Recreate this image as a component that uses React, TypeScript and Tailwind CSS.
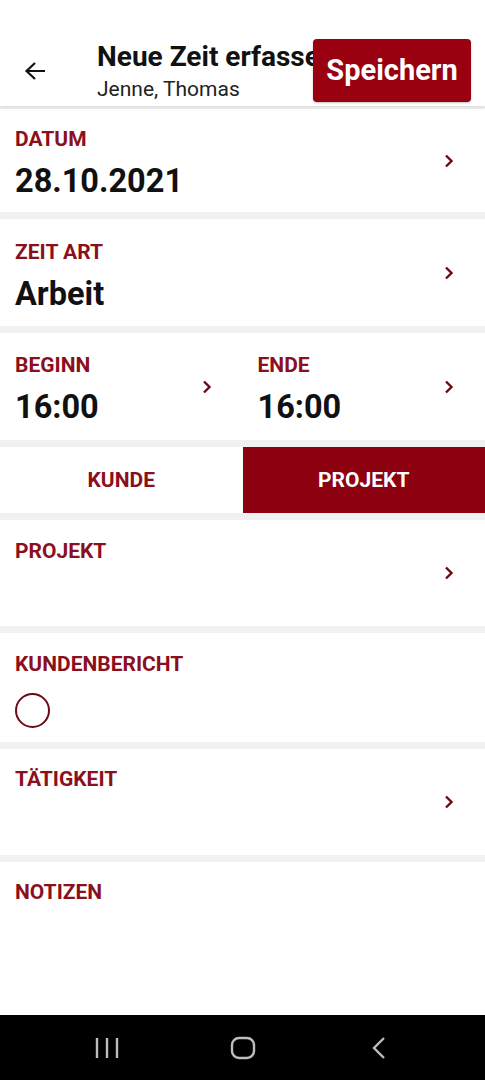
import { ReactNode } from "react";

const Chevron = () => (
  <svg width="10" height="14" viewBox="0 0 10 14" className="shrink-0">
    <path d="M2 1.5 L7.5 7 L2 12.5" fill="none" stroke="#6b0a16" strokeWidth="2.4" />
  </svg>
);

const Label = ({ children }: { children: ReactNode }) => (
  <div className="text-[21px] leading-[24px] font-bold text-[#8b0f1c]">{children}</div>
);

const Value = ({ children }: { children: ReactNode }) => (
  <div className="text-[32.5px] leading-[36px] font-bold text-[#111] mt-[12px]">{children}</div>
);

const Field = ({
  label,
  value,
  height,
  pad = "pt-[19px]",
}: {
  label: string;
  value?: string;
  height: string;
  pad?: string;
}) => (
  <div className={`bg-white flex items-center pl-[15px] pr-[31px] ${height}`}>
    <div className={`flex-1 self-start ${pad}`}>
      <Label>{label}</Label>
      {value && <Value>{value}</Value>}
    </div>
    <Chevron />
  </div>
);

export default function App() {
  return (
    <div className="w-[485px] h-[1080px] flex flex-col bg-white font-['Roboto',sans-serif] overflow-hidden">
      {/* Header */}
      <div className="h-[107px] flex items-start bg-white shadow-[0_2px_3px_rgba(0,0,0,0.08)] z-10 relative">
        <div className="w-[97px] shrink-0 pl-[24px] pt-[61px]">
          <svg width="22" height="20" viewBox="0 0 22 20">
            <path d="M21 10 H3 M11 2 L2.5 10 L11 18" fill="none" stroke="#111" strokeWidth="2.2" />
          </svg>
        </div>
        <div className="flex-1 min-w-0 overflow-hidden pt-[40px] whitespace-nowrap">
          <div className="text-[28px] leading-[34px] font-bold text-[#111]">Neue Zeit erfassen</div>
          <div className="text-[21px] leading-[26px] text-[#222] mt-[2px]">Jenne, Thomas</div>
        </div>
        <div className="mt-[39px] mr-[14px] w-[158px] h-[63px] shrink-0 rounded-[4px] bg-[#990010] text-white text-[29px] font-bold flex items-center justify-center shadow-[0_1px_2px_rgba(0,0,0,0.25)]">
          Speichern
        </div>
      </div>

      {/* Content */}
      <div className="flex flex-col gap-[7px] bg-[#f1f1f1] pt-[3px]">
        <Field label="DATUM" value="28.10.2021" height="h-[103px]" pad="pt-[18px]" />
        <Field label="ZEIT ART" value="Arbeit" height="h-[107px]" pad="pt-[21px]" />
        <div className="bg-white h-[107px] flex">
          <div className="flex-1 flex items-center pl-[15px] pr-[31px]">
            <div className="flex-1 self-start pt-[20px]">
              <Label>BEGINN</Label>
              <Value>16:00</Value>
            </div>
            <Chevron />
          </div>
          <div className="flex-1 flex items-center pl-[15px] pr-[31px]">
            <div className="flex-1 self-start pt-[20px]">
              <Label>ENDE</Label>
              <Value>16:00</Value>
            </div>
            <Chevron />
          </div>
        </div>
        <div className="h-[66px] flex bg-white">
          <div className="flex-1 flex items-center justify-center text-[21px] font-bold text-[#8b0f1c]">KUNDE</div>
          <div className="flex-1 flex items-center justify-center text-[21px] font-bold text-white bg-[#8d0010]">PROJEKT</div>
        </div>
        <Field label="PROJEKT" height="h-[106px]" />
        <div className="bg-white h-[109px] pl-[15px] pt-[19px]">
          <Label>KUNDENBERICHT</Label>
          <div className="mt-[17px] w-[35px] h-[35px] rounded-full border-[2.5px] border-[#6b0a16]" />
        </div>
        <Field label="TÄTIGKEIT" height="h-[106px]" pad="pt-[18px]" />
        <div className="bg-white h-[153px] pl-[15px] pt-[18px]">
          <Label>NOTIZEN</Label>
        </div>
      </div>

      {/* Android nav bar */}
      <div className="h-[65px] bg-black flex items-center justify-center">
        <div className="w-[136px] flex justify-center">
          <svg width="24" height="22" viewBox="0 0 24 22">
            <path d="M2 1 V21 M12 1 V21 M22 1 V21" stroke="#bdbdbd" strokeWidth="2.4" />
          </svg>
        </div>
        <div className="w-[136px] flex justify-center">
          <svg width="26" height="24" viewBox="0 0 26 24">
            <rect x="2" y="2" width="22" height="20" rx="7" fill="none" stroke="#bdbdbd" strokeWidth="2.4" />
          </svg>
        </div>
        <div className="w-[136px] flex justify-center">
          <svg width="16" height="24" viewBox="0 0 16 24">
            <path d="M13 2 L3 12 L13 22" fill="none" stroke="#bdbdbd" strokeWidth="2.4" />
          </svg>
        </div>
      </div>
    </div>
  );
}
